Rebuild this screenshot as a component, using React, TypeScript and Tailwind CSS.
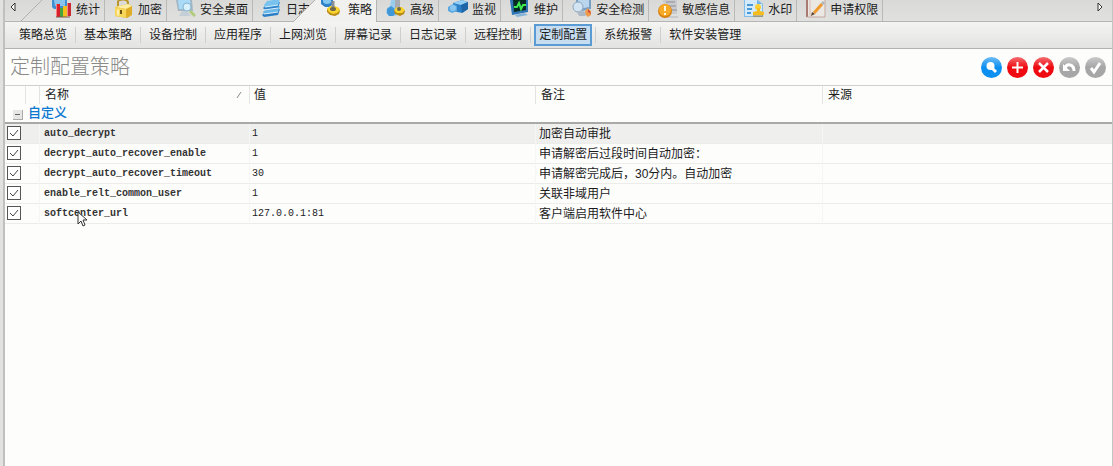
import { useState, type ReactNode } from "react";

type Tab = { label: string; icon: ReactNode };

const tabs: Tab[] = [
  {
    label: "统计",
    icon: (
      <>
        <path d="M0 0h15v6l-1 3H2L0 7z" fill="#3c8fd0" />
        <path d="M2 0h11v6H3z" fill="#86c4ee" />
        <path d="M4 4h4v13H4z" fill="#d9202c" />
        <path d="M4 4h1v13H4z" fill="#f58080" />
        <path d="M8 8h4v9H8z" fill="#45a53c" />
        <path d="M11 6h4v11h-4z" fill="#f4bd1e" />
        <path d="M15 3h4v13h-4z" fill="#c92a33" />
        <path d="M15 3h1v13h-1z" fill="#f08a8a" />
        <path d="M4 17h14" stroke="#7a5a4a" />
      </>
    ),
  },
  {
    label: "加密",
    icon: (
      <>
        <path d="M4 8V2c0-3 10-4 10 1v3" fill="none" stroke="#b8962c" strokeWidth="2" />
        <path d="M1 7l13-3 4 2v9l-5 3-12-2z" fill="#dfae26" />
        <path d="M1 7l13-3 4 2-6 3z" fill="#fceea2" />
        <path d="M1 7l11 2v9L1 16z" fill="#f6d75c" />
        <path d="M3 9l2 1v6l-2-1z" fill="#fcf0b0" />
        <path d="M7 10v4" stroke="#6b5514" strokeWidth="2" />
      </>
    ),
  },
  {
    label: "安全桌面",
    icon: (
      <>
        <path d="M0 0h16l1 11H2z" fill="#a3b6c4" />
        <path d="M2 0h12l1 9H3z" fill="#a9dbf6" />
        <path d="M6 11h6l1 3 2 2H3z" fill="#c3ced6" />
        <circle cx="11" cy="7" r="4" fill="#d9f1fd" stroke="#86b6d0" />
        <path d="M14 11l5 5" stroke="#b1cc7c" strokeWidth="3" />
      </>
    ),
  },
  {
    label: "日志",
    icon: (
      <>
        <path d="M4 12l14-3-2 6-14 2-2-2z" fill="#2c7fc4" />
        <path d="M4 9l14-3-2 6-14 2-1-2z" fill="#6bb7e8" />
        <path d="M4 5l14-3-2 6-13 2-2-2z" fill="#2f86cb" />
        <path d="M5 1l13-2-2 6-13 2-1-2z" fill="#78c2ee" />
        <path d="M3 7l13-2M2 10l14-2M2 14l14-2" stroke="#d9effb" />
      </>
    ),
  },
  {
    label: "策略",
    icon: (
      <>
        <path d="M0 0h12v4l-3 3H4L0 4z" fill="#2c83c9" />
        <ellipse cx="6" cy="1" rx="4" ry="3" fill="#84c8f1" />
        <path d="M6 9l3-2 2-1 3 1 3 1 2 3-1 3-4 2-5-1-3-3z" fill="#b98c16" />
        <path d="M6 9l3-3h5l4 2 1 2-3 3-4 1-4-2z" fill="#f9d42c" />
        <path d="M12 1v9" stroke="#8a8d92" strokeWidth="3" />
        <ellipse cx="12" cy="9" rx="3" ry="2" fill="#70684a" />
      </>
    ),
  },
  {
    label: "高级",
    icon: (
      <>
        <path d="M5 0h5l1 5 2 6-3 5H3l-3-3 1-5 3-2z" fill="#9accec" />
        <path d="M1 9l4-3 4 3 1 4-3 3H3l-2-3z" fill="#3f97d8" />
        <path d="M9 0h5v9H9z" fill="#a9abb2" />
        <path d="M8 11l3-3h5l3 3-1 3-4 2-5-2z" fill="#b98c16" />
        <path d="M8 10l3-3h5l3 3-3 3h-5z" fill="#f9d42c" />
        <ellipse cx="13" cy="9" rx="2" ry="2" fill="#70684a" />
      </>
    ),
  },
  {
    label: "监视",
    icon: (
      <>
        <path d="M5 3l9-3 6 2v7l-6 4-9-2z" fill="#2b7fc6" />
        <path d="M5 3l9-3 6 2-7 3z" fill="#93cff5" />
        <path d="M13 5l7-3v7l-6 4z" fill="#1d65a7" />
        <path d="M0 7l5-3 4 2v5l-5 2-4-2z" fill="#5aa9e0" />
        <ellipse cx="5" cy="8" rx="3" ry="3" fill="#8bc7ef" />
      </>
    ),
  },
  {
    label: "维护",
    icon: (
      <>
        <path d="M0 0h18v12L2 15z" fill="#2f74b4" />
        <path d="M3 0h13v10L4 12z" fill="#062b23" />
        <path d="M4 7h3l2-4 2 6 2-4h3" fill="none" stroke="#3dec4f" strokeWidth="2" />
        <path d="M5 15l9-2 4 2-11 2z" fill="#86b5d9" />
      </>
    ),
  },
  {
    label: "安全检测",
    icon: (
      <>
        <path d="M4 0h15v9L5 12z" fill="#7a9fc4" />
        <path d="M6 0h11v7L7 9z" fill="#b9d6ee" />
        <circle cx="6" cy="7" r="5" fill="#d3e5f3" stroke="#8ba6bf" />
        <path d="M5 12l2 4h6l2-2-3-3z" fill="#aeb9c8" />
        <path d="M14 15l-1-4 3-3 1 2 2 1v4l-3 2z" fill="#ef9a48" />
        <path d="M16 9l2 2 1 3-3-2z" fill="#d84a38" />
      </>
    ),
  },
  {
    label: "敏感信息",
    icon: (
      <>
        <path d="M5 0h14v14H8z" fill="#c9cacd" />
        <path d="M8 2h9M9 6h9M12 10h7" stroke="#8d8f96" />
        <path d="M4 17h16" stroke="#b4b5b9" />
        <circle cx="7" cy="11" r="7" fill="#d9820f" />
        <circle cx="7" cy="10" r="6" fill="#f8aa26" />
        <path d="M7 6v5M7 13v2" stroke="#fff8dc" strokeWidth="2" />
      </>
    ),
  },
  {
    label: "水印",
    icon: (
      <>
        <path d="M0 0h14l5 4v13H0z" fill="#84bce9" />
        <path d="M1 0h12l5 4v12H1z" fill="#d3eafb" />
        <path d="M13 0l5 4h-5z" fill="#6fb3e6" />
        <path d="M3 5h6M3 9h5M3 13h4" stroke="#4b98d6" strokeWidth="2" />
        <circle cx="14" cy="7" r="3" fill="#f8cf35" />
        <path d="M13 8h3v3l4 1v3H9v-3l4-1z" fill="#f3bd20" />
        <path d="M9 16h10" stroke="#a17a20" />
      </>
    ),
  },
  {
    label: "申请权限",
    icon: (
      <>
        <path d="M1 0h18v17H1z" fill="#ebe8e3" />
        <path d="M1 0v17" stroke="#a87a72" strokeWidth="2" />
        <path d="M19 0v17M1 17h18" stroke="#c4a79d" />
        <path d="M4 0v17" stroke="#dcb9b2" />
        <path d="M8 13l8-9" stroke="#ef9a2c" strokeWidth="3" />
        <path d="M5 16l1-4 3 2z" fill="#5b4630" />
        <path d="M16 4l2-2" stroke="#aeb6bd" strokeWidth="3" />
      </>
    ),
  },
];

const pages = [
  "策略总览",
  "基本策略",
  "设备控制",
  "应用程序",
  "上网浏览",
  "屏幕记录",
  "日志记录",
  "远程控制",
  "定制配置",
  "系统报警",
  "软件安装管理",
];

const rows = [
  { name: "auto_decrypt", value: "1", remark: "加密自动审批" },
  { name: "decrypt_auto_recover_enable", value: "1", remark: "申请解密后过段时间自动加密：" },
  { name: "decrypt_auto_recover_timeout", value: "30", remark: "申请解密完成后，30分内。自动加密" },
  { name: "enable_relt_common_user", value: "1", remark: "关联非域用户" },
  { name: "softcenter_url", value: "127.0.0.1:81", remark: "客户端启用软件中心" },
];

const actions = [
  {
    label: "查找",
    color: "bg-[#0b8ff0]",
    icon: (
      <>
        <circle cx="9.5" cy="9" r="4" fill="#fff" />
        <path d="M11 11l4 4" stroke="#fff" strokeWidth="3" />
      </>
    ),
  },
  { label: "添加", color: "bg-[#ee0a10]", icon: <path d="M10.5 5v11M5 10.500h11" stroke="#fff" strokeWidth="2" /> },
  { label: "删除", color: "bg-[#ee0a10]", icon: <path d="M6 6l9 9M15 6l-9 9" stroke="#fff" strokeWidth="2.5" /> },
  {
    label: "还原",
    color: "bg-[#a6a6a6]",
    icon: (
      <>
        <path d="M6 11c2-5 9-4 9 3" fill="none" stroke="#fff" strokeWidth="3" />
        <path d="M4 7v7h7z" fill="#fff" />
      </>
    ),
  },
  {
    label: "确定",
    color: "bg-[#a6a6a6]",
    icon: <path d="M6 11l3 4 6-9" fill="none" stroke="#fff" strokeWidth="3" />,
  },
];

function TabBar() {
  const [active, setActive] = useState("策略");

  return (
    <nav className="flex h-[22px] bg-linear-to-b from-[#d9d9d8] to-[#e1e1e0]">
      <div className="flex flex-1 border-b border-[#b5b5b4]">
        <button aria-label="向左" className="flex h-[14px] w-[15px] items-center justify-center">
          <svg className="size-2" viewBox="0 0 8 8">
            <path d="M6 0v8L2 4z" fill="#fff" stroke="#333" />
          </svg>
        </button>
        <svg className="h-[21px] w-[23px]" viewBox="0 0 23 21">
          <path d="M1 21L22 0" stroke="#b0b0af" />
        </svg>
        {tabs.map((tab) => {
          const on = tab.label === active;
          return (
            <button
              key={tab.label}
              onClick={() => setActive(tab.label)}
              className={
                on
                  ? "relative flex h-[22px] shrink-0 items-start gap-[7px] border-r border-[#b5b5b4] bg-[#f1f1f0] pr-1 pl-[6px]"
                  : "flex h-[21px] shrink-0 items-start gap-1 border-r border-[#b9b9b8] pr-1 pl-[9px]"
              }
            >
              {on && (
                <svg className="absolute top-0 right-full h-[22px] w-[23px]" viewBox="0 0 23 22">
                  <path d="M1 22L23 0v22z" fill="#f1f1f0" />
                  <path d="M1 22L23 0" stroke="#b0b0af" />
                </svg>
              )}
              <svg className="h-[18px] w-5" viewBox="0 0 20 18">
                {tab.icon}
              </svg>
              <span className="leading-5">{tab.label}</span>
            </button>
          );
        })}
        <button aria-label="向右" className="ml-auto flex h-[14px] w-6 items-center justify-center">
          <svg className="size-2" viewBox="0 0 8 8">
            <path d="M2 0v8l4-4z" fill="#fff" stroke="#333" />
          </svg>
        </button>
      </div>
    </nav>
  );
}

function PageBar() {
  const [active, setActive] = useState("定制配置");

  return (
    <nav className="flex h-[27px] items-center border-b border-[#b3b3b2] bg-linear-to-b from-[#f4f4f3] to-[#e3e3e2] pl-[6px]">
      {pages.map((page) => (
        <div key={page} className="flex h-4 items-center border-r border-[#cfcfce] px-[3px] last:border-0">
          <button
            onClick={() => setActive(page)}
            className={
              page === active
                ? "h-[22px] border-2 border-[#5b9bd3] bg-[#c6ddf1] px-[3px] leading-[18px]"
                : "h-[22px] border-2 border-transparent px-[3px] leading-[18px]"
            }
          >
            {page}
          </button>
        </div>
      ))}
    </nav>
  );
}

function PolicyTable() {
  return (
    <table className="w-full table-fixed border-separate border-spacing-0 border-t border-[#cfcfce] text-left">
      <colgroup>
        <col className="w-[21px]" />
        <col className="w-[14px]" />
        <col className="w-[210px]" />
        <col className="w-[286px]" />
        <col className="w-[287px]" />
        <col />
      </colgroup>
      <thead>
        <tr className="h-[18px] leading-[18px] *:border-[#e4e4e3] *:p-0 *:font-normal">
          <td className="border-r" />
          <td className="border-r" />
          <th className="border-r">
            <div className="flex items-center justify-between pr-[6px] pl-[5px]">
              名称
              <svg className="size-2" viewBox="0 0 8 8">
                <path d="M2 7l4-6" stroke="#888" />
              </svg>
            </div>
          </th>
          <th className="border-r">
            <div className="pl-1">值</div>
          </th>
          <th className="border-r">
            <div className="pl-[5px]">备注</div>
          </th>
          <th>
            <div className="pl-[5px]">来源</div>
          </th>
        </tr>
      </thead>
      <tbody>
        <tr className="h-5">
          <th colSpan={6} className="border-b-2 border-[#a9a9a8] p-0">
            <div className="flex h-[18px] items-center gap-[5px] pl-2">
              <button
                aria-label="折叠"
                className="mt-1 flex size-[10px] items-center justify-center border-r border-b border-[#aaa] bg-[#e6e6e5]"
              >
                <span className="h-px w-[5px] bg-[#666]" />
              </button>
              <span className="text-[13px] leading-[18px] font-medium text-[#0c79d0]">自定义</span>
            </div>
          </th>
        </tr>
        {rows.map((row) => (
          <tr
            key={row.name}
            className="h-5 leading-[18px] *:border-b *:border-[#ececeb] *:p-0 nth-2:bg-[#efefee]"
          >
            <td className="align-top">
              <span className="relative mt-[2px] ml-[2px] flex size-[14px]">
                <input
                  type="checkbox"
                  defaultChecked
                  aria-label={row.name}
                  className="peer size-[14px] appearance-none border border-[#555] bg-white"
                />
                <svg className="pointer-events-none absolute inset-0 hidden size-[14px] peer-checked:block" viewBox="0 0 14 14">
                  <path d="M3 7l3 3 5-6" fill="none" stroke="#444" />
                </svg>
              </span>
            </td>
            <td className="border-r border-r-[#f6f6f5]!" />
            <td className="border-r border-r-[#f6f6f5]!">
              <div className="pl-1 font-['Liberation_Mono',monospace] text-[10px] font-bold text-[#333]">{row.name}</div>
            </td>
            <td className="border-r border-r-[#f6f6f5]!">
              <div className="pl-[2px] font-['Liberation_Mono',monospace] text-[10px]">{row.value}</div>
            </td>
            <td className="border-r border-r-[#f6f6f5]!">
              <div className="pl-[3px]">{row.remark}</div>
            </td>
            <td />
          </tr>
        ))}
      </tbody>
    </table>
  );
}

export default function App() {
  return (
    <div className="relative flex min-h-screen bg-[#fdfdfc] font-['Liberation_Sans','Noto_Sans_CJK_SC',sans-serif] text-[12px] text-[#1c1c1c]">
      <div className="w-[5px] shrink-0 border-r-2 border-[#c0c0bf] bg-[#e2e2e1]" />
      <main className="min-w-0 flex-1 border-r border-[#c4c4c3]">
        <TabBar />
        <PageBar />
        <header className="flex h-9 items-center justify-between pr-[6px] pl-[5px]">
          <h1 className="text-[20px] leading-9 font-light text-[#8a8a89]">定制配置策略</h1>
          <div className="flex gap-[5px]">
            {actions.map((action) => (
              <button
                key={action.label}
                aria-label={action.label}
                className={`size-[21px] rounded-full ${action.color} bg-linear-to-b from-white/40 to-transparent to-50%`}
              >
                <svg viewBox="0 0 21 21">{action.icon}</svg>
              </button>
            ))}
          </div>
        </header>
        <PolicyTable />
      </main>
      <svg className="pointer-events-none absolute top-[211px] left-[77px] h-4 w-[11px]" viewBox="0 0 11 16">
        <path d="M1 1v12l3-3 2 5 2-1-2-5h4z" fill="#fff" stroke="#333" />
      </svg>
    </div>
  );
}
